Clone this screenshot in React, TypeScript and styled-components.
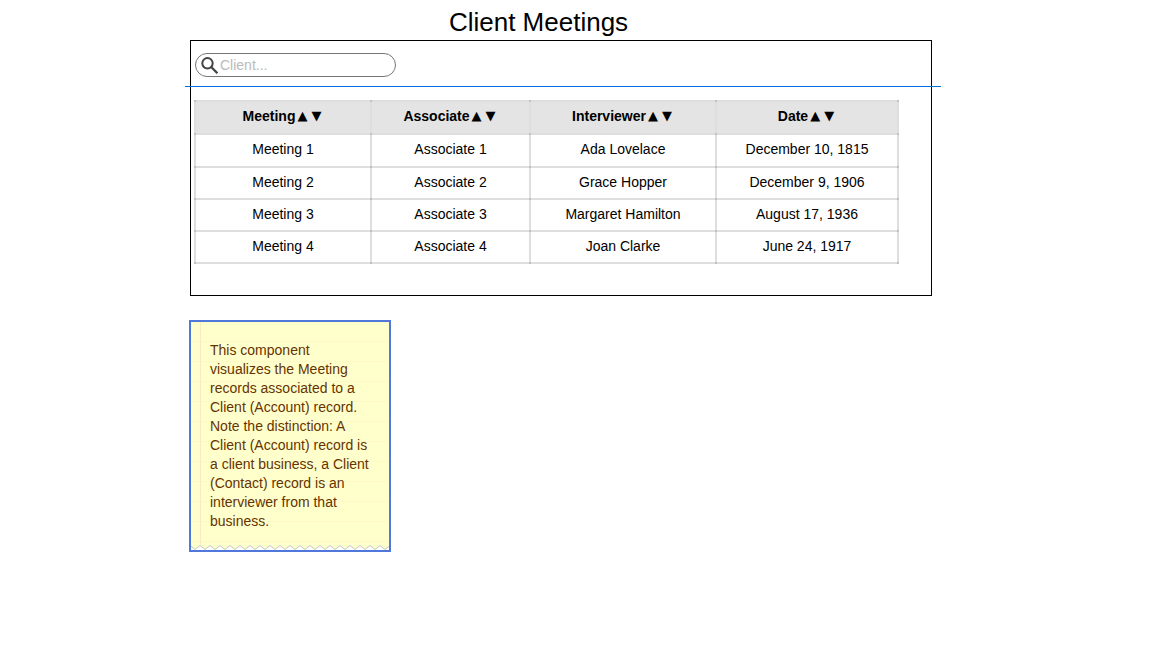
import React, { useState } from "react";
import styled, { createGlobalStyle } from "styled-components";

const GlobalStyle = createGlobalStyle`
  *, *::before, *::after { box-sizing: border-box; }
  body {
    margin: 0;
    background: #fff;
    color: #000;
    font-family: "Liberation Sans", Arial, sans-serif;
    font-size: 14px;
  }
`;

const Page = styled.main`
  padding: 4px 220px 24px 190px;
`;

const Title = styled.h1`
  margin: 0;
  padding-right: 45px;
  font-size: 26px;
  font-weight: 400;
  line-height: 36px;
  text-align: center;
`;

const Panel = styled.section`
  border: 1px solid #000;
  padding-bottom: 31px;
`;

const Toolbar = styled.div`
  display: flex;
  margin: 0 -10px 0 -6px;
  padding: 12px 10px 9px;
  border-bottom: 1px solid #0070e0;
`;

const SearchBox = styled.label`
  display: flex;
  align-items: center;
  gap: 2px;
  width: 201px;
  height: 24px;
  padding: 0 12px 0 5px;
  border: 1px solid #767676;
  border-radius: 12px;
`;

const SearchInput = styled.input`
  flex: 1;
  min-width: 0;
  padding: 0;
  border: 0;
  outline: 0;
  background: transparent;
  font: inherit;
  line-height: 20px;
  &::placeholder { color: #bababa; opacity: 1; }
`;

const TableWrap = styled.div`
  padding: 13px 32px 0 3px;
`;

const Table = styled.table`
  width: 100%;
  table-layout: fixed;
  border-collapse: collapse;
  text-align: center;
`;

const Column = styled.col<{ $share: number }>`
  width: ${(p) => p.$share}px;
`;

const HeadCell = styled.th`
  height: 33px;
  padding: 0 0 3px;
  border: 2px solid rgba(0, 0, 0, 0.13);
  background: #e4e4e4;
  background-clip: padding-box;
  font-weight: 700;
  line-height: 18px;
`;

const Cell = styled.td`
  height: 32px;
  padding: 0 0 2px;
  border: 2px solid rgba(0, 0, 0, 0.13);
  line-height: 18px;

  tr:first-child > & { height: 33px; padding-bottom: 3px; }
`;

const SortButton = styled.button`
  padding: 0 2px;
  border: 0;
  background: none;
  color: inherit;
  font-family: "DejaVu Sans", sans-serif;
  font-size: 13px;
  line-height: 16px;
  vertical-align: 1px;
  cursor: pointer;
`;

const Note = styled.aside`
  position: relative;
  width: 202px;
  margin: 24px 0 0 -1px;
  padding: 19px;
  border: 2px solid #5078dc;
  background:
    linear-gradient(90deg, transparent 9px, #ffe9c4 9px, #ffe9c4 10px, transparent 10px),
    repeating-linear-gradient(#ffffcc 0, #ffffcc 19px, #fdf8c4 19px, #fdf8c4 20px);
  color: #663300;
  line-height: 19px;
`;

const NoteText = styled.p`
  margin: 0;
`;

const TornEdge = styled.svg`
  position: absolute;
  left: 0;
  bottom: 0;
  width: 100%;
  height: 5px;
`;

type Key = "meeting" | "associate" | "interviewer" | "date";
type Meeting = Record<Key, string>;

const columns: { key: Key; label: string; share: number }[] = [
  { key: "meeting", label: "Meeting", share: 176 },
  { key: "associate", label: "Associate", share: 159 },
  { key: "interviewer", label: "Interviewer", share: 186 },
  { key: "date", label: "Date", share: 182 },
];

const meetings: Meeting[] = [
  { meeting: "Meeting 1", associate: "Associate 1", interviewer: "Ada Lovelace", date: "December 10, 1815" },
  { meeting: "Meeting 2", associate: "Associate 2", interviewer: "Grace Hopper", date: "December 9, 1906" },
  { meeting: "Meeting 3", associate: "Associate 3", interviewer: "Margaret Hamilton", date: "August 17, 1936" },
  { meeting: "Meeting 4", associate: "Associate 4", interviewer: "Joan Clarke", date: "June 24, 1917" },
];

const sortValue = (row: Meeting, key: Key) => (key === "date" ? Date.parse(row.date) : row[key]);

export default function App() {
  const [query, setQuery] = useState("");
  const [sort, setSort] = useState<{ key: Key; dir: number } | null>(null);

  const rows = meetings.filter((m) =>
    Object.values(m).some((v) => v.toLowerCase().includes(query.toLowerCase()))
  );
  if (sort) {
    rows.sort((a, b) => (sortValue(a, sort.key) > sortValue(b, sort.key) ? sort.dir : -sort.dir));
  }

  return (
    <>
      <GlobalStyle />
      <Page>
        <Title>Client Meetings</Title>
        <Panel>
          <Toolbar>
            <SearchBox>
              <svg width="17" height="17" viewBox="0 0 17 17" fill="none" stroke="#444" aria-hidden="true">
                <circle cx="6.5" cy="6.3" r="5.2" strokeWidth="2" />
                <path d="M10.2 10l6.2 6.2" strokeWidth="2.3" />
              </svg>
              <SearchInput
                type="text"
                aria-label="Client"
                placeholder="Client..."
                value={query}
                onChange={(e) => setQuery(e.target.value)}
              />
            </SearchBox>
          </Toolbar>
          <TableWrap>
            <Table>
              <colgroup>
                {columns.map((c) => (
                  <Column key={c.key} $share={c.share} />
                ))}
              </colgroup>
              <thead>
                <tr>
                  {columns.map((c) => (
                    <HeadCell key={c.key} scope="col">
                      {c.label}
                      <SortButton aria-label={`Sort ${c.label} ascending`} onClick={() => setSort({ key: c.key, dir: 1 })}>
                        ▲
                      </SortButton>
                      <SortButton aria-label={`Sort ${c.label} descending`} onClick={() => setSort({ key: c.key, dir: -1 })}>
                        ▼
                      </SortButton>
                    </HeadCell>
                  ))}
                </tr>
              </thead>
              <tbody>
                {rows.map((m) => (
                  <tr key={m.meeting}>
                    {columns.map((c) => (
                      <Cell key={c.key}>{m[c.key]}</Cell>
                    ))}
                  </tr>
                ))}
              </tbody>
            </Table>
          </TableWrap>
        </Panel>
        <Note>
          <NoteText>
            This component visualizes the Meeting records associated to a Client (Account) record. Note the
            distinction: A Client (Account) record is a client business, a Client (Contact) record is an interviewer
            from that business.
          </NoteText>
          <TornEdge aria-hidden="true">
            <defs>
              <pattern id="torn" width="10" height="5" patternUnits="userSpaceOnUse" x="4">
                <path d="M0 5L5 0L10 5Z" fill="#fff" />
                <path d="M0 4.5L5 0.5L10 4.5" fill="none" stroke="#c4c4c4" />
              </pattern>
            </defs>
            <rect width="100%" height="5" fill="url(#torn)" />
          </TornEdge>
        </Note>
      </Page>
    </>
  );
}
